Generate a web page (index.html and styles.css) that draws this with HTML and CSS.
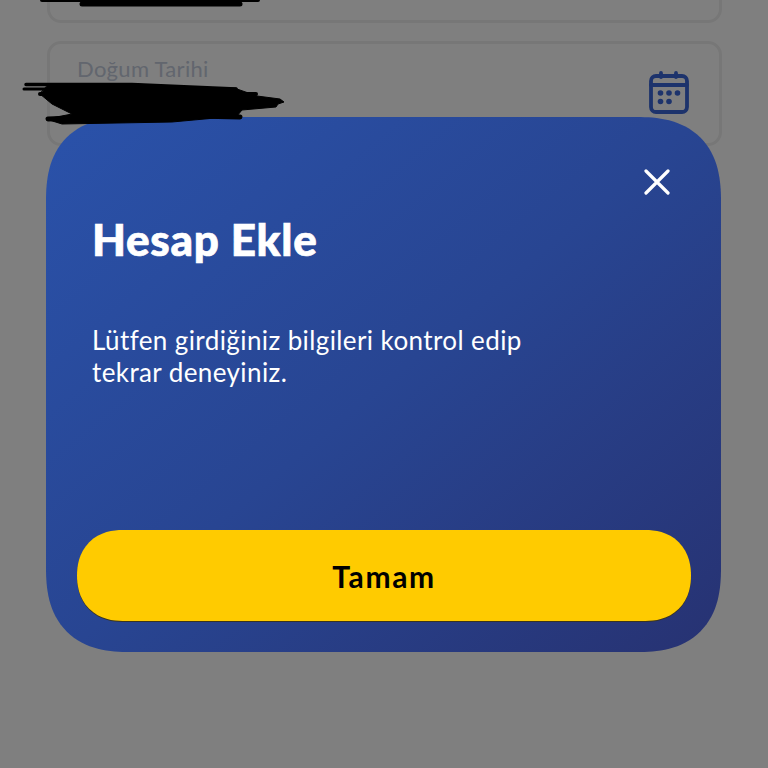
FILE: index.html
```html
<!DOCTYPE html>
<html lang="tr">
<head>
<meta charset="utf-8">
<title>Hesap Ekle</title>
<link rel="stylesheet" href="styles.css">
</head>
<body>
<main class="form">
  <div class="field field-top"></div>
  <div class="field field-date">
    <div class="field-text"><span class="field-label">Doğum Tarihi</span></div>
    <svg class="cal" viewBox="0 0 40 43" width="40" height="43" fill="none" stroke="#3a66d8" stroke-width="3.800" stroke-linecap="round">
      <rect x="2" y="5" width="36" height="36" rx="5"/>
      <path d="M2 14H38M12 1.900V6M27 1.900V6"/>
      <g fill="#3a66d8" stroke="none">
        <circle cx="11.500" cy="22" r="2.800"/><circle cx="20" cy="22" r="2.800"/><circle cx="28.500" cy="22" r="2.800"/>
        <circle cx="11.500" cy="30.500" r="2.800"/><circle cx="20" cy="30.500" r="2.800"/>
      </g>
    </svg>
  </div>
</main>

<svg class="scribble scribble-top" viewBox="0 0 230 8" width="230" height="8" fill="none" stroke="#000" stroke-linecap="round">
  <path d="M2 0H218" stroke-width="4"/><path d="M42 4H200" stroke-width="5"/>
</svg>
<svg class="scribble scribble-date" viewBox="0 0 264 44" width="264" height="44" fill="#000" stroke="#000" stroke-linecap="round">
  <path d="M26 3L112 2L215 7L235 14L258 17L262 20L256 22L254 25L220 28L215 34L150 40L40 42L24 37L50 32L30 22L18 12Z" stroke-width="1"/>
  <path d="M4 2.500L110 2.500L214 7" stroke-width="3.500"/>
  <path d="M2 7H214" stroke-width="3"/>
  <path d="M18 12H234" stroke-width="4"/>
  <path d="M26 37L130 33L218 35" stroke-width="5"/>
</svg>

<div class="backdrop"></div>

<section class="modal">
  <button class="close" aria-label="Kapat">
    <svg viewBox="0 0 26 26" width="26" height="26" fill="none" stroke="#fff" stroke-width="3.200" stroke-linecap="round"><path d="M2 2L24 24M24 2L2 24"/></svg>
  </button>
  <h1 class="title">Hesap Ekle</h1>
  <p class="message">Lütfen girdiğiniz bilgileri kontrol edip<br>tekrar deneyiniz.</p>
  <button class="ok">Tamam</button>
</section>
</body>
</html>
```

FILE: styles.css
```css
* { box-sizing: border-box; }
html, body { margin: 0; height: 100%; }
body {
  width: 768px;
  height: 768px;
  overflow: hidden;
  position: relative;
  background: #fff;
  font-family: Lato, "Noto Sans", sans-serif;
}
.form {
  display: flex;
  flex-direction: column;
  gap: 18px;
  padding: 0 46px 0 47px;
  margin-top: -61px;
}
.field {
  border: 3px solid #efefef;
  border-radius: 14px;
  background: #fff;
}
.field-top { height: 84px; }
.field-date {
  height: 105px;
  display: flex;
  justify-content: space-between;
  padding: 12px 30px 0 27px;
}
.field-label {
  font-size: 22px;
  line-height: 26px;
  letter-spacing: 0.3px;
  color: #c4ccdc;
}
.cal { margin-top: 15px; }
.backdrop {
  position: absolute;
  inset: 0;
  background: rgba(0, 0, 0, 0.5);
}
.scribble { position: absolute; z-index: 3; }
.scribble-top { left: 40px; top: 0; }
.scribble-date { left: 22px; top: 82px; }
.modal {
  position: absolute;
  z-index: 2;
  left: 46px;
  top: 117px;
  width: 675px;
  height: 535px;
  border-radius: 84px;
  corner-shape: superellipse(1.3);
  background: linear-gradient(140deg, #2a52aa 0%, #284592 50%, #273272 100%);
  padding: 96px 30px 31px 31px;
  display: flex;
  flex-direction: column;
}
.close {
  position: absolute;
  top: 52px;
  right: 51px;
  width: 26px;
  height: 26px;
  padding: 0;
  border: 0;
  background: none;
  display: flex;
}
.title {
  margin: 0 0 0 15px;
  font-size: 44px;
  line-height: 52px;
  font-weight: 900;
  letter-spacing: 0.7px;
  -webkit-text-stroke: 0.7px #fff;
  color: #fff;
}
.message {
  margin: 59px 0 0 15px;
  font-size: 26px;
  line-height: 32px;
  letter-spacing: 0.4px;
  color: #fff;
}
.ok {
  margin-top: auto;
  height: 91px;
  border: 0;
  border-radius: 46px;
  corner-shape: superellipse(1.15);
  background: #ffcb00;
  box-shadow: 0 1px 0 #3a3420;
  font: 700 30px Lato, "Noto Sans", sans-serif;
  letter-spacing: 1.6px;
  color: #000;
}
```
